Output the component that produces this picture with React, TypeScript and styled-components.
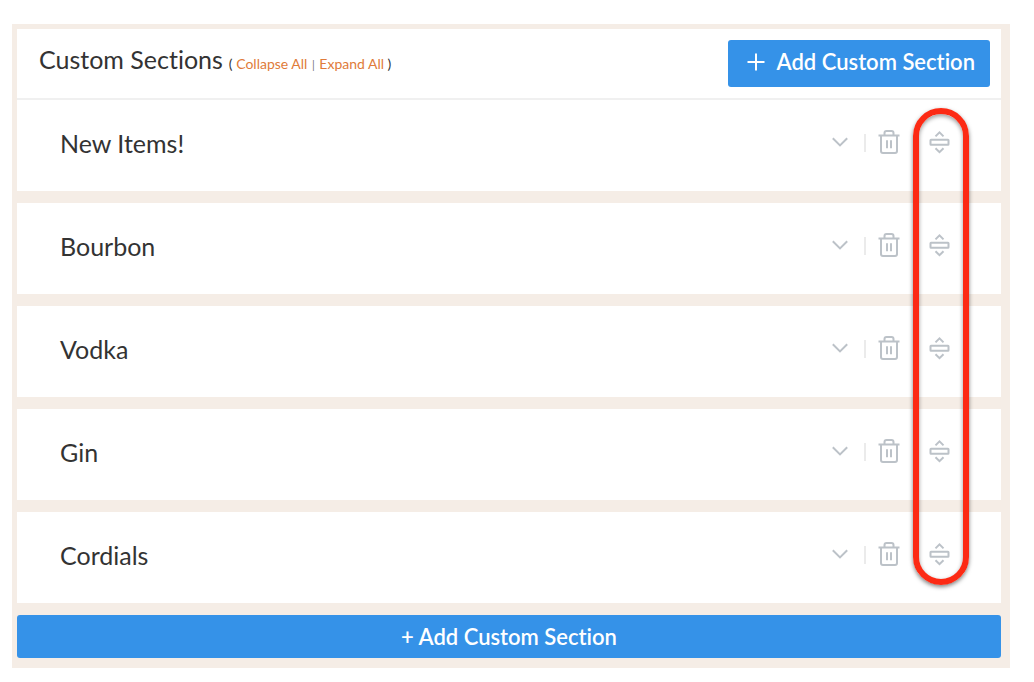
import React from "react";
import styled, { createGlobalStyle, css } from "styled-components";

const GlobalStyle = createGlobalStyle`
  *, *::before, *::after { box-sizing: border-box; }
  body {
    margin: 0;
    background: #ffffff;
    color: #333333;
    font-family: Lato, "Open Sans", sans-serif;
    font-variant-ligatures: none;
  }
`;

const Panel = styled.main`
  position: relative;
  margin: 24px 24px 14px 12px;
  padding: 5px 9px 10px 5px;
  background: #f5ede6;
`;

const Header = styled.header`
  display: flex;
  align-items: center;
  justify-content: space-between;
  min-height: 71px;
  padding: 0 11px 0 22px;
  background: #ffffff;
  border-bottom: 2px solid #f0f0f0;
`;

const Heading = styled.div`
  display: flex;
  align-items: baseline;
  gap: 6px;
  padding-bottom: 10px;
`;

const Title = styled.h1`
  margin: 0;
  font-size: 25px;
  line-height: 30px;
  font-weight: 400;
`;

const ToggleGroup = styled.span`
  font-size: 14px;
  line-height: 18px;
`;

const ToggleLink = styled.a`
  color: #e07b39;
  text-decoration: none;
`;

const Separator = styled.span`
  margin: 0 1px;
  font-size: 11px;
  color: #777777;
`;

const AddButton = styled.button<{ $block?: boolean }>`
  display: flex;
  align-items: center;
  justify-content: center;
  border: 0;
  border-radius: 3px;
  background: #3592e8;
  color: #ffffff;
  font-family: inherit;
  font-size: 22px;
  font-weight: 600;
  font-variant-ligatures: none;
  line-height: 28px;
  cursor: pointer;
  ${({ $block }) =>
    $block
      ? css`
          width: 100%;
          height: 43px;
          margin-top: 12px;
        `
      : css`
          height: 47px;
          gap: 12px;
          padding: 0 15px 3px 19px;
        `}
`;

const SectionList = styled.ul`
  display: flex;
  flex-direction: column;
  gap: 12px;
  margin: 0;
  padding: 0;
  list-style: none;
`;

const SectionRow = styled.li`
  display: flex;
  align-items: center;
  justify-content: space-between;
  min-height: 91px;
  padding: 0 51px 6px 43px;
  background: #ffffff;
`;

const SectionName = styled.h2`
  margin: 0;
  font-size: 25px;
  line-height: 32px;
  font-weight: 400;
`;

const Actions = styled.div`
  display: flex;
  align-items: center;
  padding-bottom: 2px;
`;

const IconButton = styled.button<{ $gap?: number }>`
  display: flex;
  margin: 0 0 0 ${({ $gap = 0 }) => $gap}px;
  padding: 0;
  border: 0;
  background: none;
  color: #bcc2c8;
  cursor: pointer;
`;

const Divider = styled.span`
  width: 2px;
  height: 18px;
  margin: 2px 12px 0 16px;
  background: #ebebeb;
`;

const Callout = styled.div`
  position: absolute;
  top: 84px;
  right: 41px;
  bottom: 83px;
  width: 56px;
  border: 6px solid #fc2a14;
  border-radius: 28px;
  box-shadow: 0 2px 4px rgba(0, 0, 0, 0.5), inset 0 2px 4px rgba(0, 0, 0, 0.4);
  pointer-events: none;
`;

const PlusIcon = () => (
  <svg width="18" height="18" viewBox="0 0 18 18" stroke="currentColor" strokeWidth="2" aria-hidden="true">
    <path d="M9 0.5v17M0.5 9h17" />
  </svg>
);

const ChevronIcon = () => (
  <svg width="16" height="24" viewBox="0 0 16 24" fill="none" stroke="currentColor" strokeWidth="2" aria-hidden="true">
    <path d="M0.8 8.2 8 15.4l7.2-7.2" />
  </svg>
);

const TrashIcon = () => (
  <svg width="22" height="24" viewBox="0 0 22 24" fill="none" stroke="currentColor" strokeWidth="2" aria-hidden="true">
    <path d="M0.5 5.5h21M6.5 5.5V3a2 2 0 0 1 2-2h5a2 2 0 0 1 2 2v2.5M3 5.5V21a2 2 0 0 0 2 2h12a2 2 0 0 0 2-2V5.5M9 10.3v8M13 10.3v8" />
  </svg>
);

const MoveIcon = () => (
  <svg width="21" height="24" viewBox="0 0 21 24" fill="none" stroke="currentColor" strokeWidth="2" aria-hidden="true">
    <rect x="1.5" y="9.8" width="18" height="5" rx="0.5" />
    <path d="M6.5 6.4l4-4 4 4M6.5 18.2l4 4 4-4" />
  </svg>
);

const sections = ["New Items!", "Bourbon", "Vodka", "Gin", "Cordials"];

export default function App() {
  return (
    <>
      <GlobalStyle />
      <Panel>
        <Header>
          <Heading>
            <Title>Custom Sections</Title>
            <ToggleGroup>
              ( <ToggleLink href="#collapse">Collapse All</ToggleLink>{" "}
              <Separator>|</Separator>{" "}
              <ToggleLink href="#expand">Expand All</ToggleLink> )
            </ToggleGroup>
          </Heading>
          <AddButton type="button">
            <PlusIcon />
            Add Custom Section
          </AddButton>
        </Header>
        <SectionList>
          {sections.map((name) => (
            <SectionRow key={name}>
              <SectionName>{name}</SectionName>
              <Actions>
                <IconButton type="button" aria-label={`Expand ${name}`}>
                  <ChevronIcon />
                </IconButton>
                <Divider />
                <IconButton type="button" aria-label={`Delete ${name}`}>
                  <TrashIcon />
                </IconButton>
                <IconButton type="button" $gap={29} aria-label={`Move ${name}`}>
                  <MoveIcon />
                </IconButton>
              </Actions>
            </SectionRow>
          ))}
        </SectionList>
        <AddButton type="button" $block>
          + Add Custom Section
        </AddButton>
        <Callout />
      </Panel>
    </>
  );
}
